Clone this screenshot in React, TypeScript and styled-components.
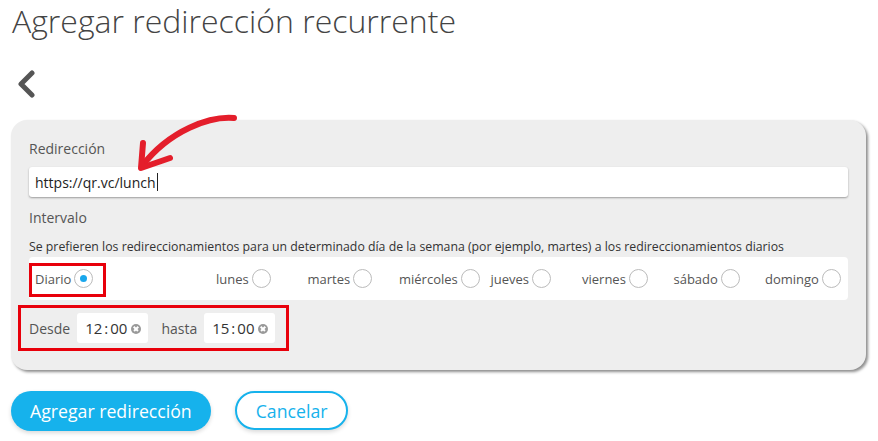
import React from 'react';
import styled, { createGlobalStyle } from 'styled-components';

const GlobalStyle = createGlobalStyle`
  body {
    margin: 0;
    background: #fff;
    font-family: 'Open Sans', 'Liberation Sans', sans-serif;
    color: #333;
  }
`;

const Page = styled.div`
  position: relative;
  width: 878px;
  height: 441px;
  padding: 0 12px 0 11px;
  box-sizing: border-box;
  overflow: hidden;
`;

const Title = styled.h1`
  margin: 0;
  padding: 0 0 0 1px;
  font-size: 32px;
  font-weight: 300;
  line-height: 42px;
  color: #444;
`;

const BackButton = styled.button`
  display: block;
  margin: 28px 0 0 4px;
  padding: 0;
  width: 24px;
  height: 28px;
  border: none;
  background: none;
  cursor: pointer;
`;

const Card = styled.div`
  margin-top: 22px;
  width: 855px;
  box-sizing: border-box;
  background: #eee;
  border-radius: 16px;
  box-shadow: 2px 2px 3px rgba(0, 0, 0, 0.45);
  padding: 18px 18px 27px 18px;
`;

const Label = styled.div`
  font-size: 14px;
  line-height: 22px;
  color: #555;
`;

const UrlInput = styled.div`
  margin-top: 7px;
  height: 30px;
  background: #fff;
  border-radius: 3px;
  box-shadow: 0 1px 2px rgba(0, 0, 0, 0.35);
  display: flex;
  align-items: center;
  padding: 0 6px;
  font-size: 14px;
  color: #222;
`;

const Caret = styled.span`
  display: inline-block;
  width: 1px;
  height: 18px;
  background: #222;
  margin-left: 1px;
`;

const IntervalLabel = styled(Label)`
  margin-top: 10px;
`;

const Hint = styled.div`
  margin-top: 9px;
  font-size: 12.3px;
  line-height: 18px;
  color: #333;
  white-space: nowrap;
`;

const DaysBox = styled.div`
  position: relative;
  margin-top: 1px;
  height: 43px;
  background: #fff;
  border-radius: 4px;
  display: grid;
  grid-template-columns: 181px repeat(7, 91.5px);
  align-items: center;
  padding-left: 6px;
`;

const DayOption = styled.label`
  display: flex;
  align-items: center;
  gap: 3px;
  font-size: 13px;
  color: #555;
`;

const Radio = styled.span<{ $checked?: boolean }>`
  width: 17px;
  height: 17px;
  border-radius: 50%;
  border: 1px solid #bbb;
  background: #fff;
  display: flex;
  align-items: center;
  justify-content: center;
  &::after {
    content: '';
    width: 7px;
    height: 7px;
    border-radius: 50%;
    background: ${(p) => (p.$checked ? '#1aa7ec' : 'transparent')};
  }
`;

const TimeRow = styled.div`
  position: relative;
  margin-top: 13px;
  display: flex;
  align-items: center;
  gap: 6px;
  font-size: 14px;
  color: #555;
`;

const TimeLabel = styled.span`
  margin-right: 1px;
  & ~ & {
    margin-left: 7px;
  }
`;

const TimeField = styled.div`
  height: 30px;
  box-sizing: border-box;
  background: #fff;
  border-radius: 3px;
  display: flex;
  align-items: center;
  padding: 0 7px 0 8px;
  gap: 4px;
  font-size: 15px;
  color: #333;
  white-space: nowrap;
`;

const Colon = styled.span`
  margin: 0 2px;
`;

const Clear = styled.span`
  width: 10px;
  height: 10px;
  border-radius: 50%;
  background: #999;
  position: relative;
  margin-top: 1px;
  &::before,
  &::after {
    content: '';
    position: absolute;
    left: 2px;
    top: 4.25px;
    width: 6px;
    height: 1.5px;
    background: #fff;
    transform: rotate(45deg);
  }
  &::after {
    transform: rotate(-45deg);
  }
`;

const RedFrame = styled.div<{ $top: number; $left: number; $w: number; $h: number }>`
  position: absolute;
  top: ${(p) => p.$top}px;
  left: ${(p) => p.$left}px;
  width: ${(p) => p.$w}px;
  height: ${(p) => p.$h}px;
  border: 3px solid #e8000b;
  box-sizing: border-box;
  pointer-events: none;
`;

const Actions = styled.div`
  margin-top: 21px;
  display: flex;
  gap: 24px;
`;

const PrimaryButton = styled.button`
  height: 40px;
  padding: 0 19px;
  border-radius: 20px;
  border: none;
  background: #16b2ec;
  color: #fff;
  font-family: inherit;
  font-size: 17.7px;
  box-shadow: 0 2px 4px rgba(0, 0, 0, 0.15);
`;

const SecondaryButton = styled.button`
  height: 39px;
  padding: 0 19px;
  border-radius: 20px;
  border: 2px solid #16b2ec;
  background: #fff;
  color: #16b2ec;
  font-family: inherit;
  font-size: 17.7px;
  box-shadow: 0 2px 4px rgba(0, 0, 0, 0.15);
`;

const Arrow = styled.svg`
  position: absolute;
  left: 130px;
  top: 110px;
  pointer-events: none;
`;

const days = ['lunes', 'martes', 'miércoles', 'jueves', 'viernes', 'sábado', 'domingo'];

const Time = ({ h, m }: { h: string; m: string }) => (
  <TimeField>
    <span>
      {h}
      <Colon>:</Colon>
      {m}
    </span>
    <Clear />
  </TimeField>
);

const App = () => {
  return (
    <Page>
      <GlobalStyle />
      <Title>Agregar redirección recurrente</Title>
      <BackButton aria-label="Volver">
        <svg width="24" height="28" viewBox="0 0 24 28">
          <path d="M17 3 L6 14 L17 25" fill="none" stroke="#555" strokeWidth="5" strokeLinecap="round" strokeLinejoin="round" />
        </svg>
      </BackButton>
      <Card>
        <Label>Redirección</Label>
        <UrlInput>
          https://qr.vc/lunch<Caret />
        </UrlInput>
        <IntervalLabel>Intervalo</IntervalLabel>
        <Hint>
          Se prefieren los redireccionamientos para un determinado día de la semana (por ejemplo, martes) a los redireccionamientos diarios
        </Hint>
        <DaysBox>
          <DayOption>
            Diario <Radio $checked />
          </DayOption>
          {days.map((d) => (
            <DayOption key={d}>
              {d} <Radio />
            </DayOption>
          ))}
          <RedFrame $top={6} $left={0} $w={77} $h={34} />
        </DaysBox>
        <TimeRow>
          <TimeLabel>Desde</TimeLabel>
          <Time h="12" m="00" />
          <TimeLabel>hasta</TimeLabel>
          <Time h="15" m="00" />
          <RedFrame $top={-8} $left={-11} $w={271} $h={46} />
        </TimeRow>
      </Card>
      <Actions>
        <PrimaryButton>Agregar redirección</PrimaryButton>
        <SecondaryButton>Cancelar</SecondaryButton>
      </Actions>
      <Arrow width="110" height="70" viewBox="0 0 110 70">
        <path d="M104 8 C 80 6, 40 20, 12 56" fill="none" stroke="#e41e2b" strokeWidth="6" strokeLinecap="round" />
        <path d="M13 33 L11 58 L40 48" fill="none" stroke="#e41e2b" strokeWidth="6" strokeLinecap="round" strokeLinejoin="round" />
      </Arrow>
    </Page>
  );
};

export default App;
